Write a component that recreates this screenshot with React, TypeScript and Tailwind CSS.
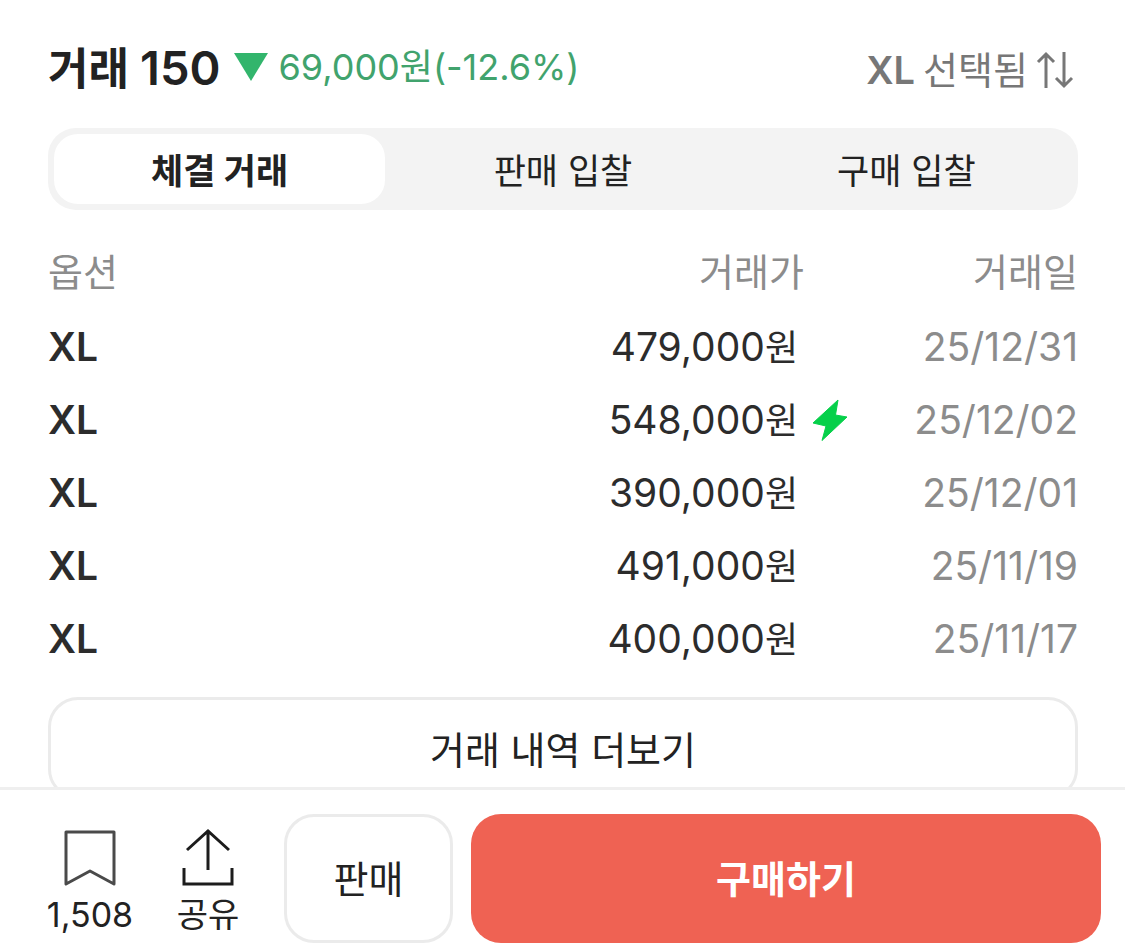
import React from 'react';

type Trade = {
    option: string,
    price: string,
    date: string,
    fast?: boolean,
};

const trades: Trade[] = [
    { option: 'XL', price: '479,000', date: '25/12/31' },
    { option: 'XL', price: '548,000', date: '25/12/02', fast: true },
    { option: 'XL', price: '390,000', date: '25/12/01' },
    { option: 'XL', price: '491,000', date: '25/11/19' },
    { option: 'XL', price: '400,000', date: '25/11/17' },
];

const tabs = ['체결 거래', '판매 입찰', '구매 입찰'];

function SortIcon() {
    return (
        <svg width="38" height="38" viewBox="0 0 38 38" fill="none" stroke="currentColor" strokeWidth="3">
            <path d="M10 37V3M2 11L10 3L18 11" />
            <path d="M28 1V35M20 27L28 35L36 27" />
        </svg>
    );
}

function BoltIcon() {
    return (
        <svg width="36" height="42" viewBox="0 0 36 42" fill="#06d04a" stroke="#06d04a" strokeWidth="1" strokeLinejoin="round">
            <path d="M26 1L23.500 16L35 18L10 41.500L14 27L1 24Z" />
        </svg>
    );
}

function BookmarkIcon() {
    return (
        <svg width="56" height="58" viewBox="0 0 56 58" fill="none" stroke="#4a4a4a" strokeWidth="3" strokeLinejoin="round">
            <path d="M4 4H52V56L28 43L4 56Z" />
        </svg>
    );
}

function ShareIcon() {
    return (
        <svg width="56" height="58" viewBox="0 0 56 58" fill="none" stroke="#1c1c1c" strokeWidth="3">
            <path d="M28 42V2M7 22L28 3L49 22" />
            <path d="M4 40V56H52V40" />
        </svg>
    );
}

function TradeRow(props: { trade: Trade }) {
    const { trade } = props;
    return (
        <tr className="h-[73px]">
            <td className="text-left font-semibold">{trade.option}</td>
            <td>
                <div className="flex items-center justify-end">
                    <span>
                        {trade.price}
                        <span className="text-[36px]">원</span>
                    </span>
                    <span className="ml-3.5 w-9">{trade.fast && <BoltIcon />}</span>
                </div>
            </td>
            <td className="text-right text-[#8c8c8c]">{trade.date}</td>
        </tr>
    );
}

function App() {
    const [active, setActive] = React.useState(0);

    return (
        <div
            lang="ko"
            className="flex h-screen flex-col overflow-hidden bg-white font-['Inter','Noto_Sans_CJK_KR',sans-serif] text-[#222]"
        >
            <main className="min-h-0 flex-1 overflow-hidden pt-[35px] pr-[47px] pl-12">
                <div className="flex h-16 items-center justify-between">
                    <div className="flex items-center">
                        <h1 className="text-[44px] leading-none font-semibold">
                            거래 <span className="text-[47px]">150</span>
                        </h1>
                        <svg className="mr-2.5 ml-3.5" width="34" height="28" viewBox="0 0 34 28" fill="#32b56c">
                            <path d="M0 0H34L17 28Z" />
                        </svg>
                        <p className="text-[36px] leading-none text-[#41a36d]">
                            69,000원(-12.6%)
                        </p>
                    </div>
                    <button type="button" className="flex items-center gap-2 pt-1.5 pr-1 text-[38px] leading-none text-[#777]">
                        <b className="font-semibold">XL</b>
                        <span>선택됨</span>
                        <SortIcon />
                    </button>
                </div>

                <div role="tablist" className="mt-[29px] grid h-[82px] grid-cols-3 gap-3 rounded-[28px] bg-[#f3f3f3] p-1.5">
                    {tabs.map((tab, i) => (
                        <button
                            key={tab}
                            type="button"
                            role="tab"
                            aria-selected={i === active}
                            onClick={() => setActive(i)}
                            className={
                                i === active
                                    ? 'rounded-3xl bg-white pt-1 text-[35px] leading-none font-bold'
                                    : 'rounded-3xl pt-1 text-[35px] leading-none'
                            }
                        >
                            {tab}
                        </button>
                    ))}
                </div>

                <table className="mt-6 w-full table-fixed text-[39px] leading-none text-[#2c2c2c]">
                    <thead>
                        <tr className="h-[76px] text-[38px] text-[#8c8c8c]">
                            <th className="text-left font-normal">옵션</th>
                            <th className="pr-11 text-right font-normal">거래가</th>
                            <th className="w-[230px] text-right font-normal">거래일</th>
                        </tr>
                    </thead>
                    <tbody>
                        {trades.map((trade) => (
                            <TradeRow key={trade.date} trade={trade} />
                        ))}
                    </tbody>
                </table>

                <button
                    type="button"
                    className="mt-[22px] h-[102px] w-full rounded-[30px] border-3 border-[#ebebeb] pt-1 text-[38px] leading-none"
                >
                    거래 내역 더보기
                </button>
            </main>

            <footer className="flex items-stretch border-t-3 border-[#efefef] bg-white pt-6 pr-6 pb-2 pl-8">
                <button type="button" className="flex w-[116px] flex-col items-center pt-3.5 text-[34px] leading-none">
                    <BookmarkIcon />
                    <span className="mt-3">1,508</span>
                </button>
                <button type="button" className="flex w-[120px] flex-col items-center pt-3.5 text-[34px] leading-none">
                    <ShareIcon />
                    <span className="mt-3">공유</span>
                </button>
                <button
                    type="button"
                    className="ml-4 h-[129px] w-[169px] rounded-[30px] border-3 border-[#ebebeb] text-[38px] leading-none"
                >
                    판매
                </button>
                <button
                    type="button"
                    className="ml-[18px] h-[129px] flex-1 rounded-[30px] bg-[#ef6253] text-[38px] leading-none font-bold text-white"
                >
                    구매하기
                </button>
            </footer>
        </div>
    );
}
export default App;
